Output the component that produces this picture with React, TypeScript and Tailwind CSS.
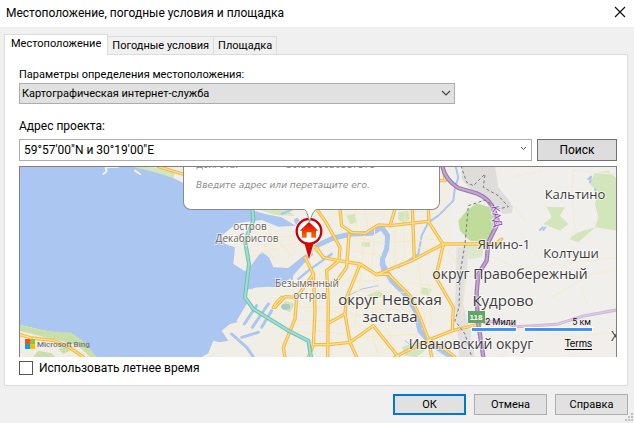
import { useState } from "react";

const majorRoads = [
  "M-440 511 L-400 522 L-330 530 L-285 552 L-245 579",
  "M-20 8 L60 32 L140 45",
  "M455 135 L480 170 L500 205 L525 250 L522 290 L485 320 L490 420 L488 579",
  "M455 250 L475 280 L520 290 L585 300 L635 332 L740 290 L835 240 L990 240 L1010 225",
  "M525 135 L530 185 L560 205 L600 208 L640 183 L675 185 L790 172 L835 242 L812 340 L865 430 L862 500",
  "M420 280 L445 330 L450 440 L445 545 L430 579",
  "M445 330 L395 400 L390 465 L355 550 L360 579",
  "M330 430 L360 398 L395 400",
  "M325 430 L335 415 L350 400",
  "M552 210 L545 310 L520 345",
  "M690 135 L675 185",
  "M742 135 L748 285",
  "M790 135 L792 172",
  "M820 50 L840 50 L838 25",
  "M585 302 L545 400 L540 450 L495 475",
  "M540 450 L555 535 L575 579",
  "M445 542 L490 542 L555 535 L625 485 L700 579",
  "M635 332 L670 330 L735 395 L765 460 L790 525 L800 579",
  "M690 579 L790 528 L862 500 L945 480",
  "M790 528 L830 548 L870 579",
  "M475 280 L440 240 L455 190",
];

const minorRoads = [
  "M270 200 L330 290 M300 190 L385 280 M245 230 L390 215 M250 280 L410 230",
  "M450 350 L640 350 M450 500 L540 510 M495 440 L590 455 M400 430 L540 430",
  "M560 220 L660 240 M560 260 L650 275 M600 210 L590 300 M630 190 L620 320",
  "M690 200 L690 310 M715 180 L720 300 M680 235 L825 225 M750 250 L830 260",
  "M590 310 L570 480 M630 335 L620 485 M565 380 L720 385 M560 430 L740 440",
  "M580 520 L760 510 M650 450 L690 560 M700 350 L840 370 M760 290 L780 480",
  "M850 260 L900 340 L890 470 M790 360 L800 480 M640 579 L620 500",
  "M380 470 L490 470 M390 500 L450 510 M370 540 L440 530 M500 520 L500 579",
  "M500 150 L660 150 M570 135 L575 190 M600 135 L610 200 M720 135 L720 175",
];

const countryRoads = [
  "M1350 30 L1225 20 L1220 90 L1230 190 L1215 225",
  "M1040 40 L1130 20 M1040 120 L1080 170",
  "M965 270 L1050 310 L1200 300 L1350 280",
  "M1160 400 L1280 330 L1350 320 M1250 370 L1265 420",
  "M1080 500 L1250 520 L1350 500 M1180 480 L1220 579 M1010 579 L1060 510",
];

function CityMap() {
  return (
    <svg
      className="block h-full w-full"
      viewBox="20 166 596 190"
      preserveAspectRatio="xMinYMin slice"
      role="img"
      aria-label="Карта"
    >
      <defs>
        <linearGradient id="pin" x1="0" y1="0" x2="0" y2="1">
          <stop offset="0" stopColor="#d80000" />
          <stop offset="1" stopColor="#ff6a00" />
        </linearGradient>
      </defs>
      <rect x="20" y="166" width="596" height="190" fill="#f1efec" />
      <g
        transform="translate(165 163) scale(0.33333)"
        fill="none"
        strokeLinejoin="round"
        strokeLinecap="round"
      >
        <path
          d="M460 0 H830 L870 80 L850 160 L880 300 L900 460 L860 579 H120 L240 300 L300 170 Z"
          fill="#f1eee6"
        />

        {/* parks and woodland */}
        <g fill="#d3e5ba">
          <path d="M-100 5 L0 14 L30 28 L25 42 L-20 36 L-110 10 Z" />
          <path d="M905 140 L935 118 L975 130 L995 165 L985 200 L960 235 L915 230 L885 200 L880 170 Z" fill="#bfdc9b" />
          <path d="M895 235 L960 235 L950 280 L915 285 L890 260 Z" fill="#dce9c8" />
          <path d="M1145 128 L1200 130 L1185 155 L1210 180 L1185 200 L1135 180 L1160 160 Z" />
          <path d="M1275 60 L1290 25 L1330 20 L1355 45 V200 L1290 190 L1240 235 L1210 225 L1240 205 L1290 190 L1300 160 L1290 120 L1300 85 Z" />
          <path d="M545 155 L570 148 L575 175 L555 180 Z" />
          <path d="M700 145 L730 140 L735 165 L715 178 L700 165 Z" />
          <path d="M590 235 L615 235 L615 248 L590 248 Z" />
          <path d="M605 395 L640 378 L660 395 L625 405 Z" />
          <path d="M500 345 L525 350 L512 372 Z" />
          <path d="M770 370 L800 375 L790 395 L765 388 Z" />
          <path d="M360 410 L390 420 L375 445 L350 435 Z" />
          <path d="M710 550 L760 530 L780 560 L755 579 L720 575 Z" />
          <path d="M880 480 L920 500 L910 579 L880 579 Z" fill="#e4e5dc" />
          <path d="M275 135 H360 L390 155 L330 153 Z" />
        </g>
        <path
          d="M890 5 H990 L1000 70 L1045 125 L1040 148 L1010 150 L980 120 L920 80 L890 45 Z"
          fill="#dedddb"
        />
        <path d="M875 250 H912 L895 420 L930 579 H885 L870 430 Z" fill="#e1e0df" />

        {/* gulf */}
        <path
          d="M-440 5 H-110 L-20 28 L30 44 L60 60 V130 L260 138 L300 150 L350 160 L392 185 L340 188 L290 168 L215 178 L170 215 L180 240 L210 250 L205 300 L240 322 L262 275 L290 263 L312 280 L325 310 L370 312 L410 280 L440 260 L445 272 L415 300 L380 340 L340 370 L305 368 L265 372 L250 400 L235 470 L195 480 L170 500 L190 530 L145 538 L135 565 L110 579 H-210 L-240 540 L-280 512 L-360 500 L-440 482 Z"
          fill="#aac6f1"
        />
        <path d="M-440 482 L-360 500 L-280 512 L-240 540 L-205 585 H-440 Z" fill="#f0eee4" />
        <path
          d="M-440 482 L-360 500 L-280 506 L-240 536 L-205 579 H-225 L-260 545 L-320 528 L-360 520 L-440 500 Z"
          fill="#c9dfaa"
        />
        <path d="M-395 579 L-380 560 L-340 568 L-330 579 Z M-320 555 L-300 548 L-285 560 L-305 570 Z" fill="#c9dfaa" />
        <path d="M-185 30 L-175 22 L-178 10 L-140 8 M-90 20 L-75 30" stroke="#f2f3e8" strokeWidth="6" />
        <g fill="#f1eee6">
          <path d="M215 250 L255 238 L290 262 L245 322 L210 285 Z" />
          <path d="M242 378 L262 374 L258 400 L245 405 Z M215 470 L275 370 L290 372 L235 480 L222 484 Z M262 455 L325 375 L335 385 L270 470 Z M180 500 L220 500 L235 520 L215 535 L200 525 Z M145 530 L165 535 L180 560 L155 579 H125 Z" />
          <path d="M250 470 L330 440 L430 510 L440 579 H200 L245 555 L220 530 L290 520 Z" />
        </g>
        <path
          d="M238 480 L275 425 M262 490 L310 420 M290 490 L320 440 M230 520 L280 505 M200 510 L245 550 M245 550 L265 579"
          stroke="#aac6f1"
          strokeWidth="9"
        />

        {/* rivers */}
        <g stroke="#aac6f1">
          <path d="M395 170 L455 245 L505 222 L560 210 L620 208 L650 190 L668 215 L665 255 L652 285 L655 315" strokeWidth="15" />
          <path d="M652 300 L680 350 L725 395 L752 440 L765 500 L800 540 L860 579" strokeWidth="16" />
          <path d="M380 345 L385 310 L415 285 M500 270 L430 320 L400 345 M350 150 L385 135 M395 180 L445 205" strokeWidth="7" />
          <path d="M870 0 L880 40 L870 70 L865 110 L820 155 L790 175 L770 215 L760 270 L700 310" strokeWidth="6" />
          <path d="M540 400 L590 375 L640 365 M720 530 L745 550 M810 545 L840 530" strokeWidth="3" />
        </g>
        <ellipse cx="362" cy="428" rx="14" ry="9" fill="#a9c9c4" />
        <path d="M1270 45 L1278 38 L1275 55 M1125 198 L1133 190 M1135 198 L1141 190 M1290 75 L1292 82" stroke="#aac6f1" strokeWidth="6" />

        {/* streets */}
        {minorRoads.map((d) => (
          <path key={d} d={d} stroke="#f5eac6" strokeWidth="3" />
        ))}
        {countryRoads.map((d) => (
          <path key={d} d={d} stroke="#f2ecdc" strokeWidth="5" />
        ))}
        {majorRoads.map((d) => (
          <path key={d} d={d} stroke="#f1b850" strokeWidth="10" />
        ))}
        {majorRoads.map((d) => (
          <path key={d} d={d} stroke="#fde17f" strokeWidth="4" />
        ))}

        {/* western diameter */}
        <path d="M262 135 L265 170 L240 230 L252 300 L240 400 L265 435 L330 475 L370 500 L430 530 L438 579" stroke="#6fbfb0" strokeWidth="12" />
        <path d="M262 135 L265 170 L240 230 L252 300 L240 400 L265 435 L330 475 L370 500 L430 530 L438 579" stroke="#9fe0d3" strokeWidth="6" />

        {/* ring road */}
        <path d="M960 476 L1000 470 L1055 488 L1175 481 L1255 456 L1355 438" stroke="#cdb4d6" strokeWidth="9" />
        <path d="M960 476 L1000 470 L1055 488 L1175 481 L1255 456 L1355 438" stroke="#ddcbe3" strokeWidth="4" />
        <path d="M832 5 Q838 45 880 72 L935 88 Q975 105 988 140 L1000 175 L970 235 L965 290 L940 330 L935 386 L938 466 L955 579" stroke="#9c7aae" strokeWidth="13" />
        <path d="M832 5 Q838 45 880 72 L935 88 Q975 105 988 140 L1000 175 L970 235 L965 290 L940 330 L935 386 L938 466 L955 579" stroke="#c3a6d1" strokeWidth="6" />

        {/* administrative boundary */}
        <path
          d="M888 5 L905 55 L925 65 L960 30 L955 70 L1000 95 L1030 128 L1000 135 L960 108 L910 125 L900 240 L885 330 L882 430 L870 470 L900 510 L920 579"
          stroke="#777"
          strokeWidth="3"
          strokeDasharray="9 7"
          strokeLinecap="butt"
        />
      </g>

      {/* place names */}
      <g
        className="font-['Open_Sans','Noto_Sans',sans-serif]"
        textAnchor="middle"
        fill="#3c3c3c"
        stroke="#fff"
        strokeWidth="2"
        strokeOpacity="0.6"
        paintOrder="stroke"
      >
        <g fontSize="10" fill="#6b645a">
          <text x="250" y="229">остров</text>
          <text x="247" y="241">Декабристов</text>
          <text x="307" y="286">Безымянный</text>
          <text x="310" y="298">остров</text>
        </g>
        <g fontSize="13">
          <text x="575" y="198">Кальтино</text>
          <text x="504" y="248">Янино-1</text>
          <text x="571" y="257">Колтуши</text>
        </g>
        <g fontSize="14">
          <text x="510" y="278">округ Правобережный</text>
          <text x="471" y="348">Ивановский округ</text>
          <text x="615" y="340">Х</text>
        </g>
        <g fontSize="15">
          <text x="390" y="304">округ Невская</text>
          <text x="390" y="321">застава</text>
          <text x="503" y="305">Кудрово</text>
        </g>
        <text
          x="0"
          y="0"
          fontSize="11"
          fill="#8a3fc4"
          transform="translate(493 216) rotate(80)"
        >
          КАД
        </text>
      </g>
      <rect x="468" y="310" width="17" height="12" fill="#62a462" />
      <text
        x="476"
        y="319"
        textAnchor="middle"
        className="font-['Liberation_Sans',sans-serif] text-[8px] font-bold"
        fill="#fff"
      >
        118
      </text>

      {/* scale bars */}
      <g className="font-['Roboto',sans-serif] text-[9px]" textAnchor="end" fill="#111">
        <text x="516" y="324">2 Мили</text>
        <text x="591" y="324">5 км</text>
      </g>
      <g fill="#3f94f5" stroke="#fff" strokeWidth="1">
        <rect x="471.5" y="326.5" width="45" height="4" />
        <rect x="524.5" y="326.5" width="68" height="4" />
      </g>

      {/* provider mark */}
      <g>
        <rect x="25" y="338" width="5" height="5" fill="#f25022" />
        <rect x="30" y="338" width="5" height="5" fill="#8bc53f" />
        <rect x="25" y="343" width="5" height="5" fill="#00a4ef" />
        <rect x="30" y="343" width="5" height="5" fill="#ffb900" />
      </g>
      <text
        x="37"
        y="346"
        className="font-['Roboto',sans-serif] text-[8px] font-medium"
        fill="#71767d"
      >
        Microsoft Bing
      </text>

      {/* location pin */}
      <g transform="translate(165 163) scale(0.33333)">
        <circle cx="432" cy="202" r="43" fill="#fff" />
        <path d="M414 236 H450 L432 290 Z" fill="#fff" />
        <circle cx="432" cy="202" r="37" fill="#fff" stroke="#c80008" strokeWidth="7" />
        <path d="M418 238 H446 L432 286 Z" fill="#d40a00" />
        <path d="M432 174 L460 200 H453 V221 H439 V205 H425 V221 H411 V200 H404 Z" fill="url(#pin)" />
      </g>
    </svg>
  );
}

function Callout() {
  return (
    <div className="absolute top-0 left-[163px] h-[43px] w-[257px] rounded-b-lg border border-t-0 border-[#8a8a8a] bg-white font-['DejaVu_Sans',sans-serif] text-[9px] text-[#8c8c8c]">
      <div className="-mt-2 flex h-3 items-center gap-12 px-3 leading-3">
        <span>Долгота:</span>
        <span>30.3000030517578</span>
      </div>
      <p className="mt-2 px-3 leading-3 italic">Введите адрес или перетащите его.</p>
      <svg className="absolute top-[41px] left-[120px]" width="14" height="16" viewBox="0 0 14 16" aria-hidden="true">
        <path d="M0.500 1.500 C3 3 4 8 5.500 14 C7.500 8 9 3 12.500 1.500 V0 H0.500 Z" fill="#fff" />
        <path d="M0.500 1.500 C3 3 4 8 5.500 14 C7.500 8 9 3 12.500 1.500" fill="none" stroke="#8a8a8a" />
      </svg>
    </div>
  );
}

const tabs = ["Местоположение", "Погодные условия", "Площадка"];

export default function App() {
  const [tab, setTab] = useState(0);
  const [address, setAddress] = useState("59°57'00\"N и 30°19'00\"E");

  return (
    <main className="bg-[#f0f0f0] font-['Roboto','Noto_Sans',sans-serif] text-[12px] text-black">
      <header className="flex h-[27px] items-center justify-between bg-white pr-2 pb-0.5 pl-1.5">
        <h1 className="leading-4">Местоположение, погодные условия и площадка</h1>
        <button type="button" aria-label="Закрыть" className="pb-0.5">
          <svg width="12" height="12" viewBox="0 0 12 12" aria-hidden="true">
            <path d="M1 1 L11 11 M11 1 L1 11" stroke="#111" strokeWidth="1.2" />
          </svg>
        </button>
      </header>

      <div className="pt-[7px] pr-1.5 pl-1">
        <div role="tablist" className="relative z-10 flex h-5 items-end text-[11px]">
          {tabs.map((name, i) => (
            <button
              key={name}
              type="button"
              role="tab"
              aria-selected={tab === i}
              onClick={() => setTab(i)}
              className={
                tab === i
                  ? "-mb-px h-[21px] border border-b-0 border-[#dcdcdc] bg-white px-1.5 pb-0.5 leading-4"
                  : "h-[18px] border border-b-0 border-l-0 border-[#dcdcdc] px-1 leading-4"
              }
            >
              {name}
            </button>
          ))}
        </div>

        <section role="tabpanel" className="border border-[#dcdcdc] bg-white pt-3 pr-2.5 pb-[9px] pl-3.5">
          <label htmlFor="source" className="block text-[11px] leading-4">
            Параметры определения местоположения:
          </label>
          <div className="relative w-[436px] max-w-full">
            <select
              id="source"
              className="block h-[21px] w-full appearance-none border border-[#adadad] bg-[#e1e1e1] px-0.5 text-[11px] leading-4"
            >
              <option>Картографическая интернет-служба</option>
            </select>
            <svg className="pointer-events-none absolute top-[7px] right-1" width="10" height="7" viewBox="0 0 10 7" aria-hidden="true">
              <path d="M1 1 L5 5 L9 1" fill="none" stroke="#444" strokeWidth="1.2" />
            </svg>
          </div>

          <label htmlFor="address" className="mt-3.5 block leading-4">
            Адрес проекта:
          </label>
          <div className="mt-[5px] flex gap-[5px]">
            <div className="flex h-[22px] flex-1 items-center border border-[#adadad] bg-white pr-1">
              <input
                id="address"
                value={address}
                onChange={(e) => setAddress(e.target.value)}
                className="h-full min-w-0 flex-1 px-1 outline-none"
              />
              <button type="button" aria-label="Показать недавние адреса" className="pb-1">
                <svg width="7" height="5" viewBox="0 0 7 5" aria-hidden="true">
                  <path d="M1 1 L3.500 3.500 L6 1" fill="none" stroke="#555" />
                </svg>
              </button>
            </div>
            <button type="button" className="h-[22px] w-20 border border-[#707070] bg-[#dddddd] leading-4">
              Поиск
            </button>
          </div>

          <div className="relative mt-[5px] h-[191px] overflow-hidden border border-b-0 border-[#808080]">
            <CityMap />
            <Callout />
            <a
              href="#terms"
              className="absolute right-6 bottom-[7px] font-['Liberation_Sans',sans-serif] text-[10px] leading-3 underline underline-offset-2"
            >
              Terms
            </a>
          </div>

          <label className="mt-[3px] flex items-center gap-1.5 leading-4">
            <input
              type="checkbox"
              className="m-0 h-3.5 w-3.5 appearance-none border border-[#555] bg-white checked:bg-[#0078d7]"
            />
            Использовать летнее время
          </label>
        </section>
      </div>

      <footer className="relative flex justify-end gap-2 pt-2 pr-1.5 pb-2 text-[11px]">
        <button type="button" className="h-[21px] w-[73px] border-2 border-[#0078d7] bg-[#e1e1e1] leading-4">
          ОК
        </button>
        <button type="button" className="h-[21px] w-[73px] border border-[#adadad] bg-[#e1e1e1] leading-4">
          Отмена
        </button>
        <button type="button" className="h-[21px] w-[73px] border border-[#adadad] bg-[#e1e1e1] leading-4">
          Справка
        </button>
        <svg className="absolute right-px bottom-0.5" width="8" height="8" viewBox="0 0 8 8" fill="#bfbfbf" aria-hidden="true">
          <path d="M6 0h2v2H6z M3 3h2v2H3z M6 3h2v2H6z M0 6h2v2H0z M3 6h2v2H3z M6 6h2v2H6z" />
        </svg>
      </footer>
    </main>
  );
}
